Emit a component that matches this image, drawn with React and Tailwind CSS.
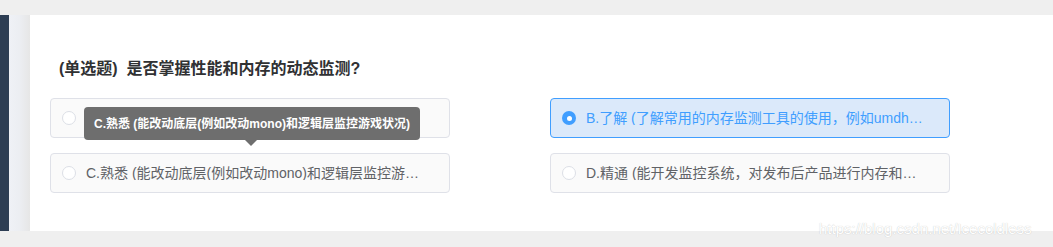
import React from "react";

const font = { fontFamily: '"Liberation Sans", Arial, "Noto Sans CJK SC", sans-serif' };

function Option({ label, checked }) {
  return (
    <div
      className={
        "flex h-[40px] w-[400px] items-center rounded-[4px] border pl-[11px] pr-[26px] " +
        (checked ? "border-[#409eff] bg-[#dbe9fa]" : "border-[#dfe1e8] bg-[#fafafa]")
      }
    >
      {checked ? (
        <span className="flex h-[14px] w-[14px] shrink-0 items-center justify-center rounded-full bg-[#409eff]">
          <span className="h-[5px] w-[5px] rounded-full bg-white" />
        </span>
      ) : (
        <span className="h-[14px] w-[14px] shrink-0 rounded-full border border-[#dcdfe6] bg-white" />
      )}
      <span
        className={
          "ml-[10px] truncate text-[14px] leading-none " +
          (checked ? "text-[#409eff]" : "text-[#606266]")
        }
      >
        {label}
      </span>
    </div>
  );
}

export default function App() {
  return (
    <div className="relative h-[247px] w-[1053px] overflow-hidden bg-[#efefef]" style={font}>
      <div className="mt-[15px] flex h-[216px]">
        <div className="w-[9px] bg-[#2e3e54]" />
        <div className="w-[21px] bg-gradient-to-r from-[#eff1f6] via-[#eceef2] to-[#e6e6e6]" />
        <div className="flex-1 bg-white pl-[20px] pt-[44px]">
          <div className="pl-[9px] text-[16px] font-bold leading-[20px] text-[#303133]">
            (单选题)&nbsp; 是否掌握性能和内存的动态监测?
          </div>
          <div className="relative mt-[19px] grid w-[900px] grid-cols-2 gap-x-[100px] gap-y-[15px]">
            <Option label="A.完全不了解 (完全没有接触过)" />
            <Option label="B.了解 (了解常用的内存监测工具的使用，例如umdh，VMMap等)" checked />
            <Option label="C.熟悉 (能改动底层(例如改动mono)和逻辑层监控游戏状况)" />
            <Option label="D.精通 (能开发监控系统，对发布后产品进行内存和性能监测)" />
            <div className="absolute left-[34px] top-[9px] flex h-[33px] items-center rounded-[4px] bg-[#6e6e6e] px-[10px] text-[12px] font-bold leading-none text-white">
              C.熟悉 (能改动底层(例如改动mono)和逻辑层监控游戏状况)
              <span className="absolute left-[161px] top-[33px] h-0 w-0 border-x-[6px] border-t-[6px] border-x-transparent border-t-[#6e6e6e]" />
            </div>
          </div>
        </div>
      </div>
      <div className="absolute left-[819px] top-[220px] text-[15px] leading-[18px] text-white [text-shadow:0_0_1px_rgba(0,0,0,0.25)]">
        https://blog.csdn.net/Icecoldless
      </div>
    </div>
  );
}
